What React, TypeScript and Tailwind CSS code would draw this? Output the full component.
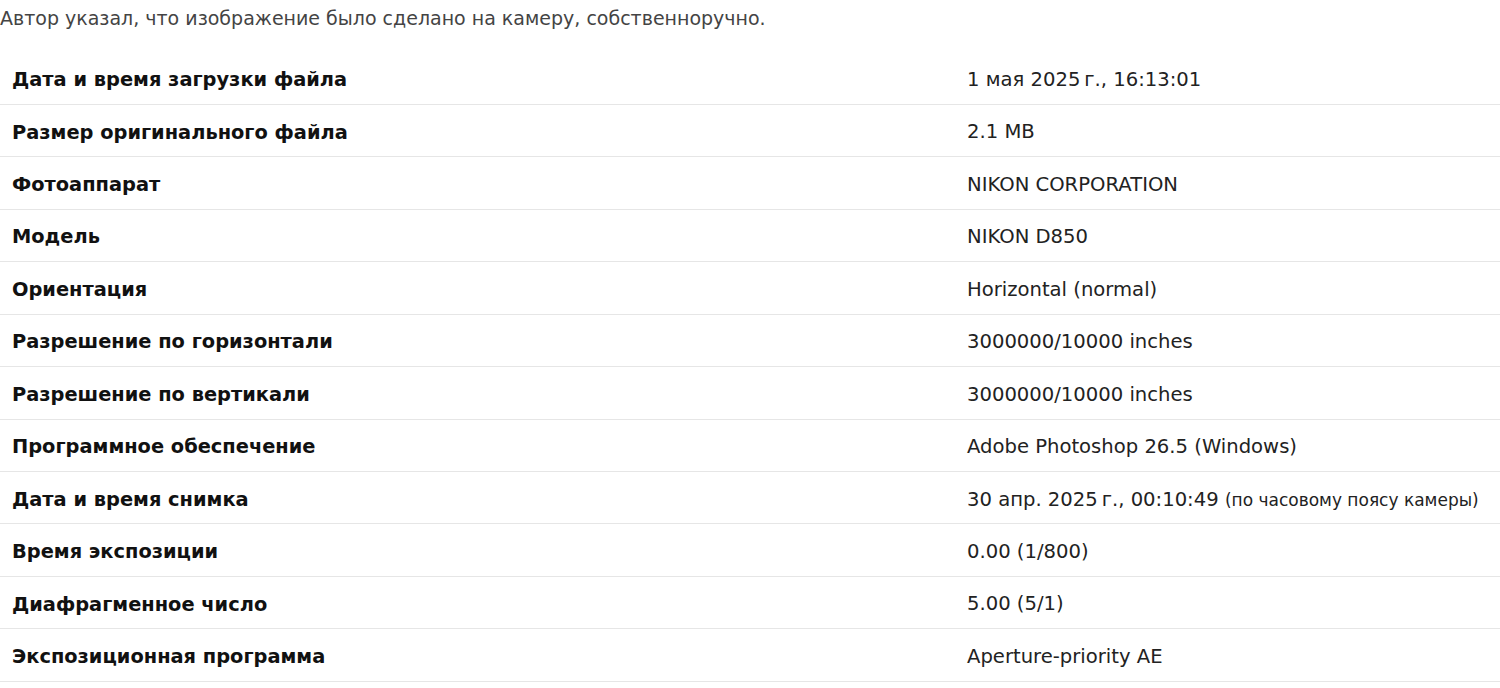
import React from "react";

const rows: [string, React.ReactNode][] = [
  ["Дата и время загрузки файла", "1 мая 2025\u202Fг., 16:13:01"],
  ["Размер оригинального файла", "2.1 MB"],
  ["Фотоаппарат", "NIKON CORPORATION"],
  ["Модель", "NIKON D850"],
  ["Ориентация", "Horizontal (normal)"],
  ["Разрешение по горизонтали", "3000000/10000 inches"],
  ["Разрешение по вертикали", "3000000/10000 inches"],
  ["Программное обеспечение", "Adobe Photoshop 26.5 (Windows)"],
  [
    "Дата и время снимка",
    <>
      30 апр. 2025{"\u202F"}г., 00:10:49{" "}
      <span className="text-[17px]">(по часовому поясу камеры)</span>
    </>,
  ],
  ["Время экспозиции", "0.00 (1/800)"],
  ["Диафрагменное число", "5.00 (5/1)"],
  ["Экспозиционная программа", "Aperture-priority AE"],
];

export default function App() {
  return (
    <div
      className="w-[1500px] h-[688px] overflow-hidden bg-white"
      style={{ fontFamily: '"DejaVu Sans", Verdana, sans-serif' }}
    >
      <p className="h-[52.5px] pt-[5px] text-[19px] leading-[26px] text-[#444]">
        Автор указал, что изображение было сделано на камеру, собственноручно.
      </p>
      <div>
        {rows.map(([k, v], i) => (
          <div
            key={i}
            className="flex h-[52.45px] items-center border-b border-[#e6e6e6] pt-[3px]"
          >
            <div className="w-[955px] pl-3 text-[19.4px] font-bold text-[#111]">{k}</div>
            <div className="pl-3 text-[19.6px] text-[#222]">{v}</div>
          </div>
        ))}
      </div>
    </div>
  );
}
